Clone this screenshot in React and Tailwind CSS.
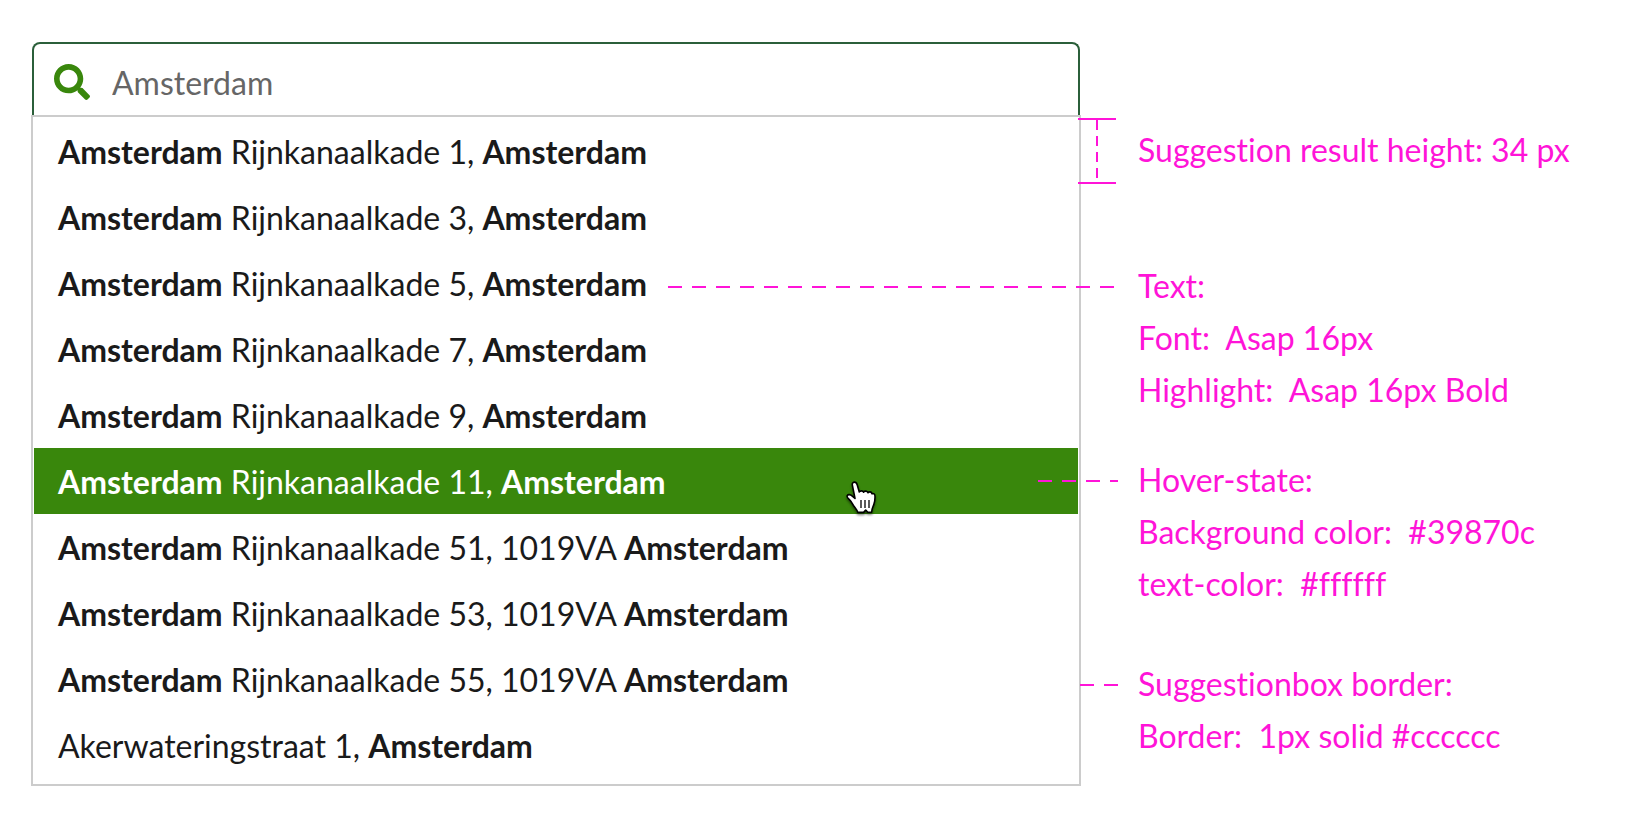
import { FaSearch } from "react-icons/fa";

const suggestions = [
  { bold: "Amsterdam", text: " Rijnkanaalkade 1, " },
  { bold: "Amsterdam", text: " Rijnkanaalkade 3, " },
  { bold: "Amsterdam", text: " Rijnkanaalkade 5, " },
  { bold: "Amsterdam", text: " Rijnkanaalkade 7, " },
  { bold: "Amsterdam", text: " Rijnkanaalkade 9, " },
  { bold: "Amsterdam", text: " Rijnkanaalkade 11, ", active: true },
  { bold: "Amsterdam", text: " Rijnkanaalkade 51, 1019VA " },
  { bold: "Amsterdam", text: " Rijnkanaalkade 53, 1019VA " },
  { bold: "Amsterdam", text: " Rijnkanaalkade 55, 1019VA " },
  { bold: "", text: "Akerwateringstraat 1, " },
];

function HandCursor() {
  return (
    <svg
      viewBox="0 0 32 34"
      aria-hidden="true"
      className="pointer-events-none absolute right-[201px] top-8 h-[34px] w-8 overflow-visible drop-shadow-[0_2px_1px_rgba(0,0,0,0.45)]"
    >
      <path
        d="M7.4 5.4C6.9 3.4 7.8 2.2 9.2 2.1C10.7 2 11.7 3 12.2 4.8L14.3 11.9C14.9 10.7 18 10.2 18.6 12.2C19.6 10.6 22.4 10.7 23 12.7C24.1 11.3 26.6 11.6 27 13.8C28.6 13.2 30 14 30 16.2C30.1 19.5 29.8 22 28.8 24.6C27.8 27.2 26.8 28.6 26.6 32.2H22.8L20.7 30L18.6 32.4H12.8C12.3 30.4 10.6 28.4 8.8 26C7.3 24 6.6 21.6 4.4 19.6C2.6 18 1.6 16.8 2.2 15.6C3 14.1 5.4 14.4 7 15.8L10 18.4Z"
        fill="#fff"
        stroke="#000"
        strokeWidth="1.6"
        strokeLinejoin="round"
      />
      <path d="M16 20v8M20 20v8M24 20v8" stroke="#000" strokeWidth="1.3" fill="none" />
    </svg>
  );
}

function Suggestion({ bold, text, active }) {
  return (
    <li className="relative">
      <button
        type="button"
        className={
          active
            ? "block w-full whitespace-pre bg-[#39870c] px-6 pt-0.5 text-left leading-[64px] text-white"
            : "block w-full whitespace-pre px-6 pt-0.5 text-left leading-[64px] text-[#1a1a1a]"
        }
      >
        {bold && <strong className="font-bold">{bold}</strong>}
        {text}
        <strong className="font-bold">Amsterdam</strong>
      </button>
      {active && <HandCursor />}
    </li>
  );
}

const dashes =
  "absolute right-full top-[26px] mr-5 h-[2px] bg-[repeating-linear-gradient(to_right,#ff14d8_0_14px,transparent_14px_24px)]";

function Note({ lines, leader, children }) {
  return (
    <div className="relative">
      {leader && <span className={`${dashes} ${leader}`} />}
      {children}
      {lines.map((line) => (
        <p key={line} className="whitespace-pre leading-[52px]">
          {line}
        </p>
      ))}
    </div>
  );
}

export default function App() {
  return (
    <main className="flex min-h-screen items-start bg-white pb-10 pl-[31px] pt-[42px] font-[Lato,'Noto_Sans',sans-serif] text-[32px] [font-variant-ligatures:none]">
      <section className="min-w-0 flex-1">
        <label className="mx-px flex h-[73px] items-center rounded-t-lg border-2 border-b-0 border-[#2b5f3a] pl-5 pt-1">
          <FaSearch aria-hidden="true" className="size-9 shrink-0 text-[#39870c]" />
          <input
            type="text"
            aria-label="Search address"
            defaultValue="Amsterdam"
            className="ml-[22px] min-w-0 flex-1 bg-transparent pt-0.5 leading-10 text-[#666] outline-none"
          />
        </label>
        <ul className="border-2 border-[#ccc] px-px pb-1.5 pt-px">
          {suggestions.map((item) => (
            <Suggestion key={item.text} {...item} />
          ))}
        </ul>
      </section>

      <aside className="w-[545px] shrink-0 pl-[57px] pt-[82px] text-[#ff14d8]">
        <Note lines={["Suggestion result height: 34 px"]}>
          <span className="absolute -top-1.5 right-full mr-[22px] flex h-[66px] w-[38px] justify-center border-y-2 border-[#ff14d8]">
            <span className="w-[2px] bg-[repeating-linear-gradient(to_bottom,#ff14d8_0_10px,transparent_10px_16px)]" />
          </span>
        </Note>
        <div className="mt-[84px]">
          <Note
            leader="w-[450px]"
            lines={["Text:", "Font:  Asap 16px", "Highlight:  Asap 16px Bold"]}
          />
        </div>
        <div className="mt-[38px]">
          <Note
            leader="w-20"
            lines={["Hover-state:", "Background color:  #39870c", "text-color:  #ffffff"]}
          />
        </div>
        <div className="mt-12">
          <Note
            leader="w-[38px]"
            lines={["Suggestionbox border:", "Border:  1px solid #cccccc"]}
          />
        </div>
      </aside>
    </main>
  );
}
